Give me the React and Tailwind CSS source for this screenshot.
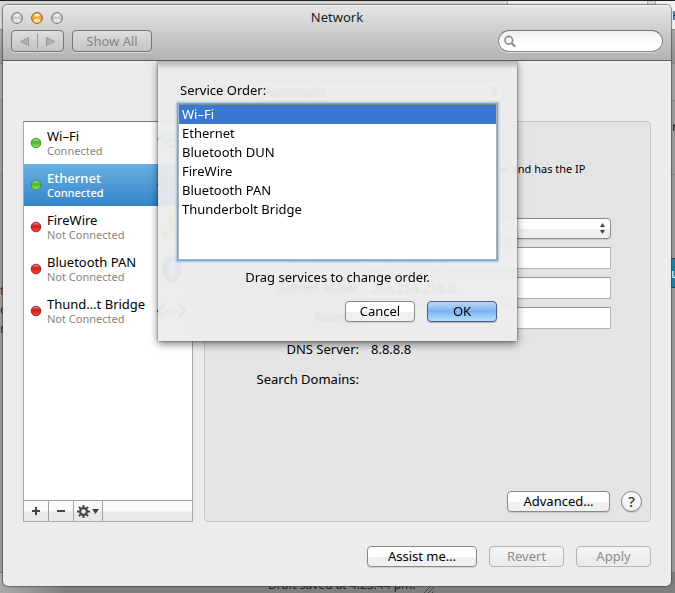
import React, { useState } from "react";

const services = [
  { name: "Wi–Fi", status: "Connected", icon: "wifi" },
  { name: "Ethernet", status: "Connected", icon: "ethernet" },
  { name: "FireWire", status: "Not Connected", icon: "firewire" },
  { name: "Bluetooth PAN", status: "Not Connected", icon: "bluetooth" },
  { name: "Thund…t Bridge", status: "Not Connected", icon: "bridge" },
];

const serviceOrder = ["Wi–Fi", "Ethernet", "Bluetooth DUN", "FireWire", "Bluetooth PAN", "Thunderbolt Bridge"];

const ServiceIcon = ({ type }) => {
  if (type === "wifi") {
    return (
      <svg width="30" height="26" viewBox="0 0 30 26" fill="none" stroke="#3b9be0" strokeWidth="3">
        <path d="M1 10C9 2 21 2 29 10M6 14c5-5 13-5 18 0M10 18c3-3 7-3 10 0" />
        <circle cx="15" cy="22" r="2" fill="#3b9be0" stroke="none" />
      </svg>
    );
  }
  if (type === "firewire") {
    return (
      <svg width="30" height="26" viewBox="0 0 30 26" fill="none" stroke="#d9a520" strokeWidth="3">
        <path d="M15 5v8M15 13l-7 8M15 13l7 8" />
        <circle cx="15" cy="4" r="2" fill="#d9a520" />
        <circle cx="8" cy="21" r="2" fill="#d9a520" />
        <circle cx="22" cy="21" r="2" fill="#d9a520" />
      </svg>
    );
  }
  if (type === "bluetooth") {
    return (
      <svg width="30" height="30" viewBox="0 0 30 30" fill="none">
        <ellipse cx="15" cy="15" rx="10" ry="14" fill="#2f6fe0" />
        <path d="M10 10l10 9-5 4V7l5 4-10 9" stroke="#fff" strokeWidth="2" />
      </svg>
    );
  }
  return (
    <svg width="30" height="20" viewBox="0 0 30 20" fill="none" stroke="#3c4650" strokeWidth="2">
      <path d="M8 3L1 10l7 7M22 3l7 7-7 7" />
      <path d="M8 10h14" strokeWidth="3" strokeDasharray="3 2" />
    </svg>
  );
};

const StatusDot = ({ on }) => {
  const id = on ? "dot-green" : "dot-red";
  return (
    <svg width="12" height="12" viewBox="0 0 12 12" className="shrink-0">
      <defs>
        <linearGradient id={id} x1="0" y1="0" x2="0" y2="1">
          <stop offset="0" stopColor={on ? "#b9e8a4" : "#f0a0a0"} />
          <stop offset="0.4" stopColor={on ? "#4cb52c" : "#cc1c1c"} />
          <stop offset="1" stopColor={on ? "#8fe860" : "#ff4a40"} />
        </linearGradient>
      </defs>
      <circle cx="6" cy="6" r="4.8" fill={`url(#${id})`} stroke={on ? "#3c8a2a" : "#8f1414"} strokeWidth="0.9" />
    </svg>
  );
};

const WindowButton = ({ label, amber }) => (
  <button type="button" aria-label={label} className="size-3">
    <svg width="12" height="12" viewBox="0 0 12 12">
      <circle cx="6" cy="6" r="5.4" fill={amber ? "#f0a53a" : "#c6c6c6"} stroke={amber ? "#8d5a22" : "#767676"} />
      <ellipse cx="6" cy="8.6" rx="3.4" ry="2" fill={amber ? "#ffe58a" : "#e6e6e6"} />
      <ellipse cx="6" cy="3.2" rx="2.8" ry="1.6" fill="#fff" opacity="0.75" />
    </svg>
  </button>
);

const Button = ({ children, className = "", ...props }) => (
  <button
    type="button"
    className={`h-[21px] rounded-[4px] border border-[#8a8a8a] bg-linear-to-b from-white from-50% to-[#f0f0f0] to-55% text-[13px] leading-[19px] text-black shadow-[0_1px_1px_rgba(0,0,0,0.12)] disabled:border-[#b5b5b5] disabled:from-[#f2f2f2] disabled:to-[#ececec] disabled:text-[#8c8c8c] disabled:shadow-none ${className}`}
    {...props}
  >
    {children}
  </button>
);

const Select = ({ id, options, className = "" }) => (
  <div className={`relative ${className}`}>
    <select
      id={id}
      className="h-[21px] w-full appearance-none rounded-[4px] border border-[#8a8a8a] bg-linear-to-b from-white from-50% to-[#f0f0f0] to-55% pl-2 text-[13px] leading-[19px] shadow-[0_1px_1px_rgba(0,0,0,0.12)] outline-none"
    >
      {options.map((option) => (
        <option key={option}>{option}</option>
      ))}
    </select>
    <svg width="5" height="11" viewBox="0 0 5 11" fill="#444" className="pointer-events-none absolute top-[5px] right-[6px]">
      <path d="M2.5 0L5 4H0zM2.5 11L5 7H0z" />
    </svg>
  </div>
);

const Row = ({ label, htmlFor, children }) => (
  <div className="flex h-[30px] items-center">
    <label htmlFor={htmlFor} className="w-[154px] shrink-0 text-right">
      {label}
    </label>
    <div className="ml-[7px] w-[245px]">{children}</div>
  </div>
);

const Field = ({ id, value }) => (
  <input
    id={id}
    type="text"
    defaultValue={value}
    className="block h-[22px] w-full border border-[#b4b4b4] border-t-[#949494] bg-white px-1 text-[13px] outline-none"
  />
);

const Backdrop = () => (
  <div className="absolute inset-0 overflow-hidden bg-[#808080] text-[13px]" aria-hidden="true">
    <div className="flex h-full flex-col">
      <div className="h-px shrink-0 bg-[#211d22]"></div>
      <div className="flex h-7 shrink-0 bg-[#d9d5d9]">
        <div className="ml-auto w-[141px] border-x border-[#aaa] bg-[#f0edf0]"></div>
        <div className="ml-[7px] w-5 border-l border-[#aaa] bg-[#f2f0f2]"></div>
      </div>
      <div className="h-[35px] shrink-0 border-y border-[#888] bg-linear-to-b from-[#aaa] to-[#929292]"></div>
      <div className="h-[37px] shrink-0 border-b border-[#868686] bg-[#a2a2a2]"></div>
      <div className="h-[74px] shrink-0 border-b border-[#868686] bg-[#9b9b9b]"></div>
      <div className="flex-1 border-b border-[#777] bg-[#999]"></div>
      <div className="h-[20px] shrink-0 bg-linear-to-r from-[#aaa] to-[#7f7f7f] to-10%"></div>
    </div>
    <div className="absolute top-[281px] left-0 w-1 leading-[19px] text-[#203050]">
      <p className="text-[#802020]">t</p>
      <p>c</p>
      <p>r</p>
    </div>
    <div className="absolute top-[6px] left-[calc(100%-3px)] text-[#223]">H</div>
    <div className="absolute top-[117px] left-[calc(100%-3px)] text-[#223]">r</div>
    <div className="absolute top-[258px] right-0 h-[30px] w-1 border-y border-[#104c66] bg-[#1d7fa3] leading-7 text-white">u</div>
    <div className="absolute bottom-0 left-[268px] flex items-end gap-2 text-xs leading-[17px] text-[#222]">
      <span>Draft saved at 4:23:44 pm.</span>
      <svg width="10" height="8" viewBox="0 0 10 8" stroke="#444">
        <path d="M0 8L8 0M4 8l6-6M8 8l2-2" />
      </svg>
    </div>
  </div>
);

const ServiceOrderSheet = ({ onClose }) => {
  const [selected, setSelected] = useState("Wi–Fi");

  return (
    <div className="pointer-events-none absolute inset-x-0 top-0 flex justify-center overflow-hidden pb-4 pl-px">
      <div
        role="dialog"
        aria-label="Service Order"
        className="pointer-events-auto w-[359px] bg-[#ececec]/93 bg-linear-to-b from-black/25 to-transparent to-3% px-5 pt-5 pb-[19px] shadow-[0_3px_8px_rgba(0,0,0,0.5),0_0_2px_rgba(0,0,0,0.5)] backdrop-blur-[1px]"
      >
        <h2 className="pl-[2px] leading-[19px]">Service Order:</h2>
        <ul
          role="listbox"
          aria-label="Service Order"
          className="mt-1 h-[156px] border border-[#b0b0b0] border-t-[#888] bg-white leading-[19px] shadow-[0_0_1px_1px_#6cabdf,0_0_2px_2px_#a5cbea]"
        >
          {serviceOrder.map((name) => (
            <li
              key={name}
              role="option"
              draggable
              aria-selected={selected === name}
              onClick={() => setSelected(name)}
              className={`px-[3px] ${selected === name ? "bg-[#3878d0] text-white" : ""}`}
            >
              {name}
            </li>
          ))}
        </ul>
        <p className="mt-2 text-center leading-[19px]">Drag services to change order.</p>
        <div className="mt-[14px] flex justify-end gap-3">
          <Button className="w-[70px]" onClick={onClose}>
            Cancel
          </Button>
          <button
            type="button"
            onClick={onClose}
            className="h-[21px] w-[70px] rounded-[4px] border border-[#4a5a98] bg-linear-to-b from-[#bdd5f3] via-[#7cb3ee] via-50% to-[#b4e2fb] leading-[19px] shadow-[0_1px_1px_rgba(0,0,0,0.25)]"
          >
            OK
          </button>
        </div>
      </div>
    </div>
  );
};

const App = () => {
  const [active, setActive] = useState("Ethernet");
  const [sheetOpen, setSheetOpen] = useState(true);

  return (
    <div className="relative flex min-h-screen flex-col pt-[5px] pr-1 pb-[7px] pl-[3px] font-['Noto_Sans',sans-serif] text-[13px] text-black">
      <Backdrop />

      <div className="relative flex flex-1 flex-col rounded-[5px] bg-[#ececec] shadow-[0_0_1px_1px_rgba(60,60,60,0.6)]">
        <header className="rounded-t-[5px] border-t border-b border-t-[#f4f4f4] border-b-[#5c5c5c] bg-linear-to-b from-[#e6e6e6] to-[#b2b2b2] pb-2">
          <div className="grid h-6 grid-cols-[1fr_auto_1fr] items-center px-2">
            <div className="flex gap-2">
              <WindowButton label="Close" />
              <WindowButton label="Minimize" amber />
              <WindowButton label="Zoom" />
            </div>
            <h1 className="pb-[2px] leading-[20px] text-[#222]">Network</h1>
          </div>
          <div className="flex h-[22px] px-2 text-[#858585]">
            <div className="flex w-[53px] items-center rounded-[4px] border border-[#777] bg-linear-to-b from-[#dedede] to-[#c4c4c4] shadow-[0_1px_0_rgba(255,255,255,0.4)]">
              <button type="button" aria-label="Back" className="flex flex-1 justify-center">
                <svg width="9" height="9" viewBox="0 0 9 9" fill="#b0b0b0" stroke="#999">
                  <path d="M8.5 0.5v8L0.5 4.5z" />
                </svg>
              </button>
              <span className="h-4 w-px bg-[#999]"></span>
              <button type="button" aria-label="Forward" className="flex flex-1 justify-center">
                <svg width="9" height="9" viewBox="0 0 9 9" fill="#b0b0b0" stroke="#999">
                  <path d="M0.5 0.5v8l8-4z" />
                </svg>
              </button>
            </div>
            <button
              type="button"
              className="ml-2 w-20 rounded-[4px] border border-[#777] bg-linear-to-b from-[#dedede] to-[#c4c4c4] leading-[20px] shadow-[0_1px_0_rgba(255,255,255,0.4)]"
            >
              Show All
            </button>
            <label className="ml-auto flex w-[165px] items-center rounded-full border border-[#8a8a8a] border-t-[#777] bg-linear-to-b from-[#eee] to-white to-60% pl-[5px] shadow-[0_1px_0_rgba(255,255,255,0.5)]">
              <svg width="13" height="13" viewBox="0 0 13 13" fill="none" stroke="#8f8f8f" strokeWidth="1.8">
                <circle cx="5.2" cy="5.2" r="4.2" />
                <path d="M8.2 8.2l4 4" strokeWidth="2.4" />
              </svg>
              <input type="search" aria-label="Search" className="w-full min-w-0 bg-transparent px-1 outline-none" />
            </label>
          </div>
        </header>

        <main className="relative flex flex-1 flex-col px-5 pb-[19px]">
          <div className="flex h-15 items-center justify-center gap-2 pl-5">
            <label htmlFor="location">Location:</label>
            <Select id="location" options={["Automatic"]} className="w-62" />
          </div>

          <div className="flex flex-1 gap-[11px]">
            <aside className="flex w-[170px] shrink-0 flex-col border border-[#a8a8a8] border-t-[#777] bg-white">
              <ul className="flex-1">
                {services.map((service) => (
                  <li key={service.name}>
                    <button
                      type="button"
                      onClick={() => setActive(service.name)}
                      className={`flex h-[42px] w-full items-center gap-[5px] pr-[6px] pl-[6px] text-left ${
                        active === service.name
                          ? "bg-linear-to-b from-[#68b1e1] to-[#3484c9] text-white"
                          : "text-black"
                      }`}
                    >
                      <StatusDot on={service.status === "Connected"} />
                      <span className="w-[105px] shrink-0 whitespace-nowrap">
                        <span className={`block leading-4 ${active === service.name ? "font-medium" : ""}`}>
                          {service.name}
                        </span>
                        <span
                          className={`block text-[11px] leading-[14px] ${
                            active === service.name ? "font-medium" : "text-[#858585]"
                          }`}
                        >
                          {service.status}
                        </span>
                      </span>
                      <ServiceIcon type={service.icon} />
                    </button>
                  </li>
                ))}
              </ul>
              <div className="flex h-[21px] border-t border-[#a0a0a0] bg-linear-to-b from-[#fafafa] from-50% to-[#e9e9e9] to-55%">
                <button type="button" aria-label="Add" className="flex w-[25px] items-center justify-center border-r border-[#a0a0a0]">
                  <svg width="8" height="8" viewBox="0 0 8 8" fill="#444">
                    <path d="M3 0h2v3h3v2H5v3H3V5H0V3h3z" />
                  </svg>
                </button>
                <button type="button" aria-label="Remove" className="flex w-[25px] items-center justify-center border-r border-[#a0a0a0]">
                  <svg width="8" height="8" viewBox="0 0 8 8" fill="#444">
                    <path d="M0 3h8v2H0z" />
                  </svg>
                </button>
                <button type="button" aria-label="Actions" className="flex w-[29px] items-center justify-center gap-[2px] border-r border-[#a0a0a0]">
                  <svg width="13" height="13" viewBox="0 0 13 13" fill="none" stroke="#444">
                    <circle cx="6.5" cy="6.5" r="3.4" strokeWidth="2.2" />
                    <path
                      d="M6.5 0v2.4M6.5 10.6V13M0 6.5h2.4M10.6 6.5H13M1.9 1.9l1.7 1.7M9.4 9.4l1.7 1.7M1.9 11.1l1.7-1.7M9.4 3.6l1.7-1.7"
                      strokeWidth="2"
                    />
                  </svg>
                  <svg width="7" height="5" viewBox="0 0 7 5" fill="#444">
                    <path d="M0 0h7L3.5 5z" />
                  </svg>
                </button>
              </div>
            </aside>

            <section className="flex flex-1 flex-col rounded-[4px] border border-[#c6c6c6] bg-[#e4e4e4]">
              <div className="flex h-[91px] flex-col pt-[9px]">
                <Row label="Status:">
                  <strong className="pl-[5px]">Connected</strong>
                </Row>
                <p className="ml-[166px] w-[230px] text-[11px] leading-[16px]">
                  Ethernet is currently active and has the IP address 172.16.42.42.
                </p>
              </div>
              <Row label="Configure IPv4:" htmlFor="configure">
                <Select id="configure" options={["Manually"]} />
              </Row>
              <Row label="IP Address:" htmlFor="ip">
                <Field id="ip" value="172.16.42.42" />
              </Row>
              <Row label="Subnet Mask:" htmlFor="subnet">
                <Field id="subnet" value="255.255.255.0" />
              </Row>
              <Row label="Router:" htmlFor="router">
                <Field id="router" value="" />
              </Row>
              <div className="pt-[2px]">
                <Row label="DNS Server:">
                  <span className="pl-[5px]">8.8.8.8</span>
                </Row>
                <Row label="Search Domains:" />
              </div>
              <div className="mt-auto flex justify-end gap-[11px] pr-2 pb-[9px]">
                <Button className="w-[103px]">Advanced…</Button>
                <button
                  type="button"
                  aria-label="Help"
                  className="size-[21px] rounded-full border border-[#808080] bg-linear-to-b from-white to-[#eee] text-[15px] leading-[19px] font-medium text-[#333] shadow-[0_1px_1px_rgba(0,0,0,0.15)]"
                >
                  ?
                </button>
              </div>
            </section>
          </div>

          <div className="mt-6 flex justify-end gap-3">
            <Button className="w-[110px]">Assist me…</Button>
            <Button className="w-[75px]" disabled>
              Revert
            </Button>
            <Button className="w-[75px]" disabled>
              Apply
            </Button>
          </div>

          {sheetOpen && <ServiceOrderSheet onClose={() => setSheetOpen(false)} />}
        </main>
      </div>
    </div>
  );
};

export default App;
